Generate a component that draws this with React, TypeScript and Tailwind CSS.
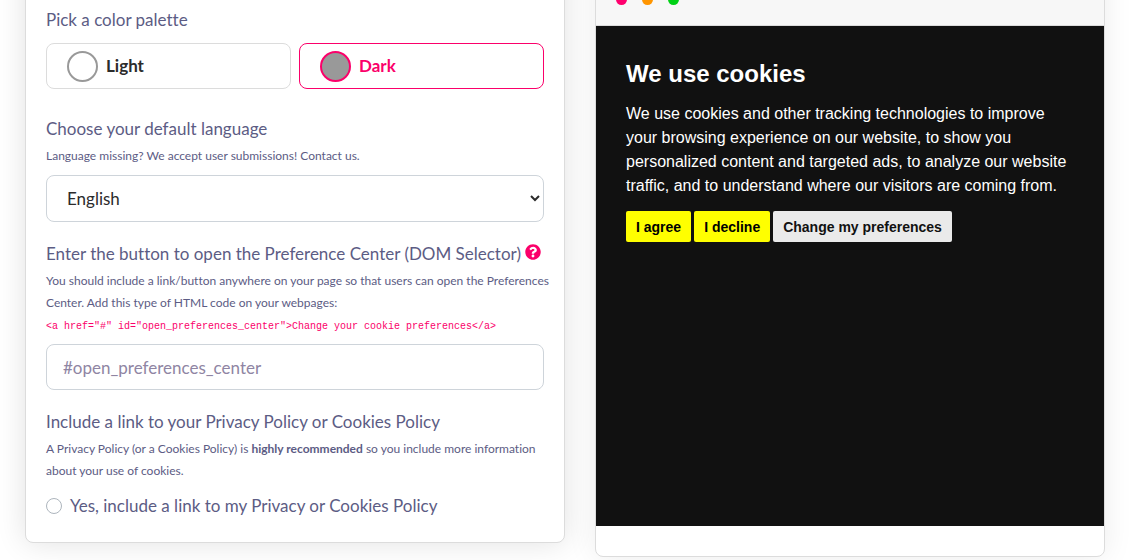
import { useState } from "react";
import { FaQuestionCircle } from "react-icons/fa";

type PaletteOptionProps = {
    label: string,
    value: string,
    selected: boolean,
    onSelect: (value: string) => void,
}

const PaletteOption: React.FC<PaletteOptionProps> = ({ label, value, selected, onSelect }) => (
    <label className={`flex h-[46px] cursor-pointer items-center gap-2 rounded-lg border px-5 text-[17px] font-bold ${selected ? "border-[#fb006a] text-[#fb006a]" : "border-[#dcdcdc] text-[#2b2b2b]"}`}>
        <input
            type="radio"
            name="palette"
            value={value}
            checked={selected}
            onChange={() => onSelect(value)}
            className={`size-[31px] appearance-none rounded-full border-2 ${value === "dark" ? "bg-[#999]" : "bg-white"} ${selected ? "border-[#fb006a]" : "border-[#999]"}`}
        />
        {label}
    </label>
)

const Hint: React.FC<{ children: React.ReactNode }> = ({ children }) => (
    <p className="mt-1 -mr-2 text-xs leading-[22px]">{children}</p>
)

const SettingsForm: React.FC = () => {
    const [palette, setPalette] = useState<string>("dark");
    const [includeLink, setIncludeLink] = useState<boolean>(false);

    return (
        <form className="self-start rounded-lg border border-[#dcdcdc] bg-white px-5 pt-[47px] pb-6 font-['Lato',sans-serif] text-[17px] leading-6 text-[#5c5c84] [font-variant-ligatures:none] shadow-[0_0_30px_rgba(0,0,0,0.12)]">
            <fieldset>
                <legend className="mb-[11px]">Pick a color palette</legend>
                <div className="grid grid-cols-2 gap-2">
                    <PaletteOption label="Light" value="light" selected={palette === "light"} onSelect={setPalette} />
                    <PaletteOption label="Dark" value="dark" selected={palette === "dark"} onSelect={setPalette} />
                </div>
            </fieldset>

            <div className="mt-7">
                <label htmlFor="language">Choose your default language</label>
                <Hint>Language missing? We accept user submissions! Contact us.</Hint>
                <select id="language" className="mt-2 block h-[47px] w-full rounded-lg border border-[#ced4da] bg-white px-4 text-[#2b2b2b]">
                    <option>English</option>
                </select>
            </div>

            <div className="mt-5">
                <div className="flex gap-1">
                    <label htmlFor="selector">Enter the button to open the Preference Center (DOM Selector)</label>
                    <button type="button" aria-label="Help" className="self-start pt-0.5 text-[#fb006a]">
                        <FaQuestionCircle className="size-4" />
                    </button>
                </div>
                <Hint>
                    You should include a link/button anywhere on your page so that users can open the Preferences Center. Add this type of HTML code on your webpages:
                </Hint>
                <code className="block font-['Liberation_Mono',monospace] text-[10px] leading-[26px] text-[#fb006a]">
                    {'<a href="#" id="open_preferences_center">Change your cookie preferences</a>'}
                </code>
                <input
                    id="selector"
                    type="text"
                    placeholder="#open_preferences_center"
                    className="mt-1 block h-[46px] w-full rounded-lg border border-[#ced4da] px-4 placeholder:text-[#8f85a3]"
                />
            </div>

            <div className="mt-5">
                <h3>Include a link to your Privacy Policy or Cookies Policy</h3>
                <Hint>
                    A Privacy Policy (or a Cookies Policy) is <strong>highly recommended</strong> so you include more information about your use of cookies.
                </Hint>
                <label className="mt-3 flex items-center gap-2">
                    <input
                        type="radio"
                        name="policy"
                        checked={includeLink}
                        onChange={() => setIncludeLink(true)}
                        className="size-4 appearance-none rounded-full border border-[#adb5bd] bg-white checked:border-4 checked:border-[#fb006a]"
                    />
                    Yes, include a link to my Privacy or Cookies Policy
                </label>
            </div>
        </form>
    )
}

const BannerPreview: React.FC = () => (
    <section className="self-start overflow-hidden rounded-lg border border-[#dcdcdc] bg-white pb-[30px] font-['Liberation_Sans',Arial,sans-serif] shadow-[0_0_30px_rgba(0,0,0,0.08)]">
        <div className="flex h-[65px] items-end gap-[15px] border-b border-[#dcdcdc] bg-[#f7f7f7] px-5 pb-5">
            <span className="size-[11px] rounded-full bg-[#ff006e]" />
            <span className="size-[11px] rounded-full bg-[#ff9500]" />
            <span className="size-[11px] rounded-full bg-[#00d115]" />
        </div>
        <div className="min-h-[500px] bg-[#111] p-[30px] text-white">
            <h1 className="text-2xl leading-9 font-bold">We use cookies</h1>
            <p className="mt-2.5 leading-6">
                We use cookies and other tracking technologies to improve your browsing experience on our website, to show you personalized content and targeted ads, to analyze our website traffic, and to understand where our visitors are coming from.
            </p>
            <div className="mt-[13px] flex flex-wrap gap-[3px] text-sm font-bold">
                <button type="button" className="h-[31px] rounded-xs bg-[#ff0] px-2.5 text-black">I agree</button>
                <button type="button" className="h-[31px] rounded-xs bg-[#ff0] px-2.5 text-black">I decline</button>
                <button type="button" className="h-[31px] rounded-xs bg-[#eaeaea] px-2.5 text-[#111]">Change my preferences</button>
            </div>
        </div>
    </section>
)

export default function App() {
    return (
        <main className="min-h-screen overflow-hidden bg-white">
            <div className="-mt-10 grid grid-cols-[18fr_17fr] gap-[30px] pr-8 pl-[25px]">
                <SettingsForm />
                <BannerPreview />
            </div>
        </main>
    )
}
